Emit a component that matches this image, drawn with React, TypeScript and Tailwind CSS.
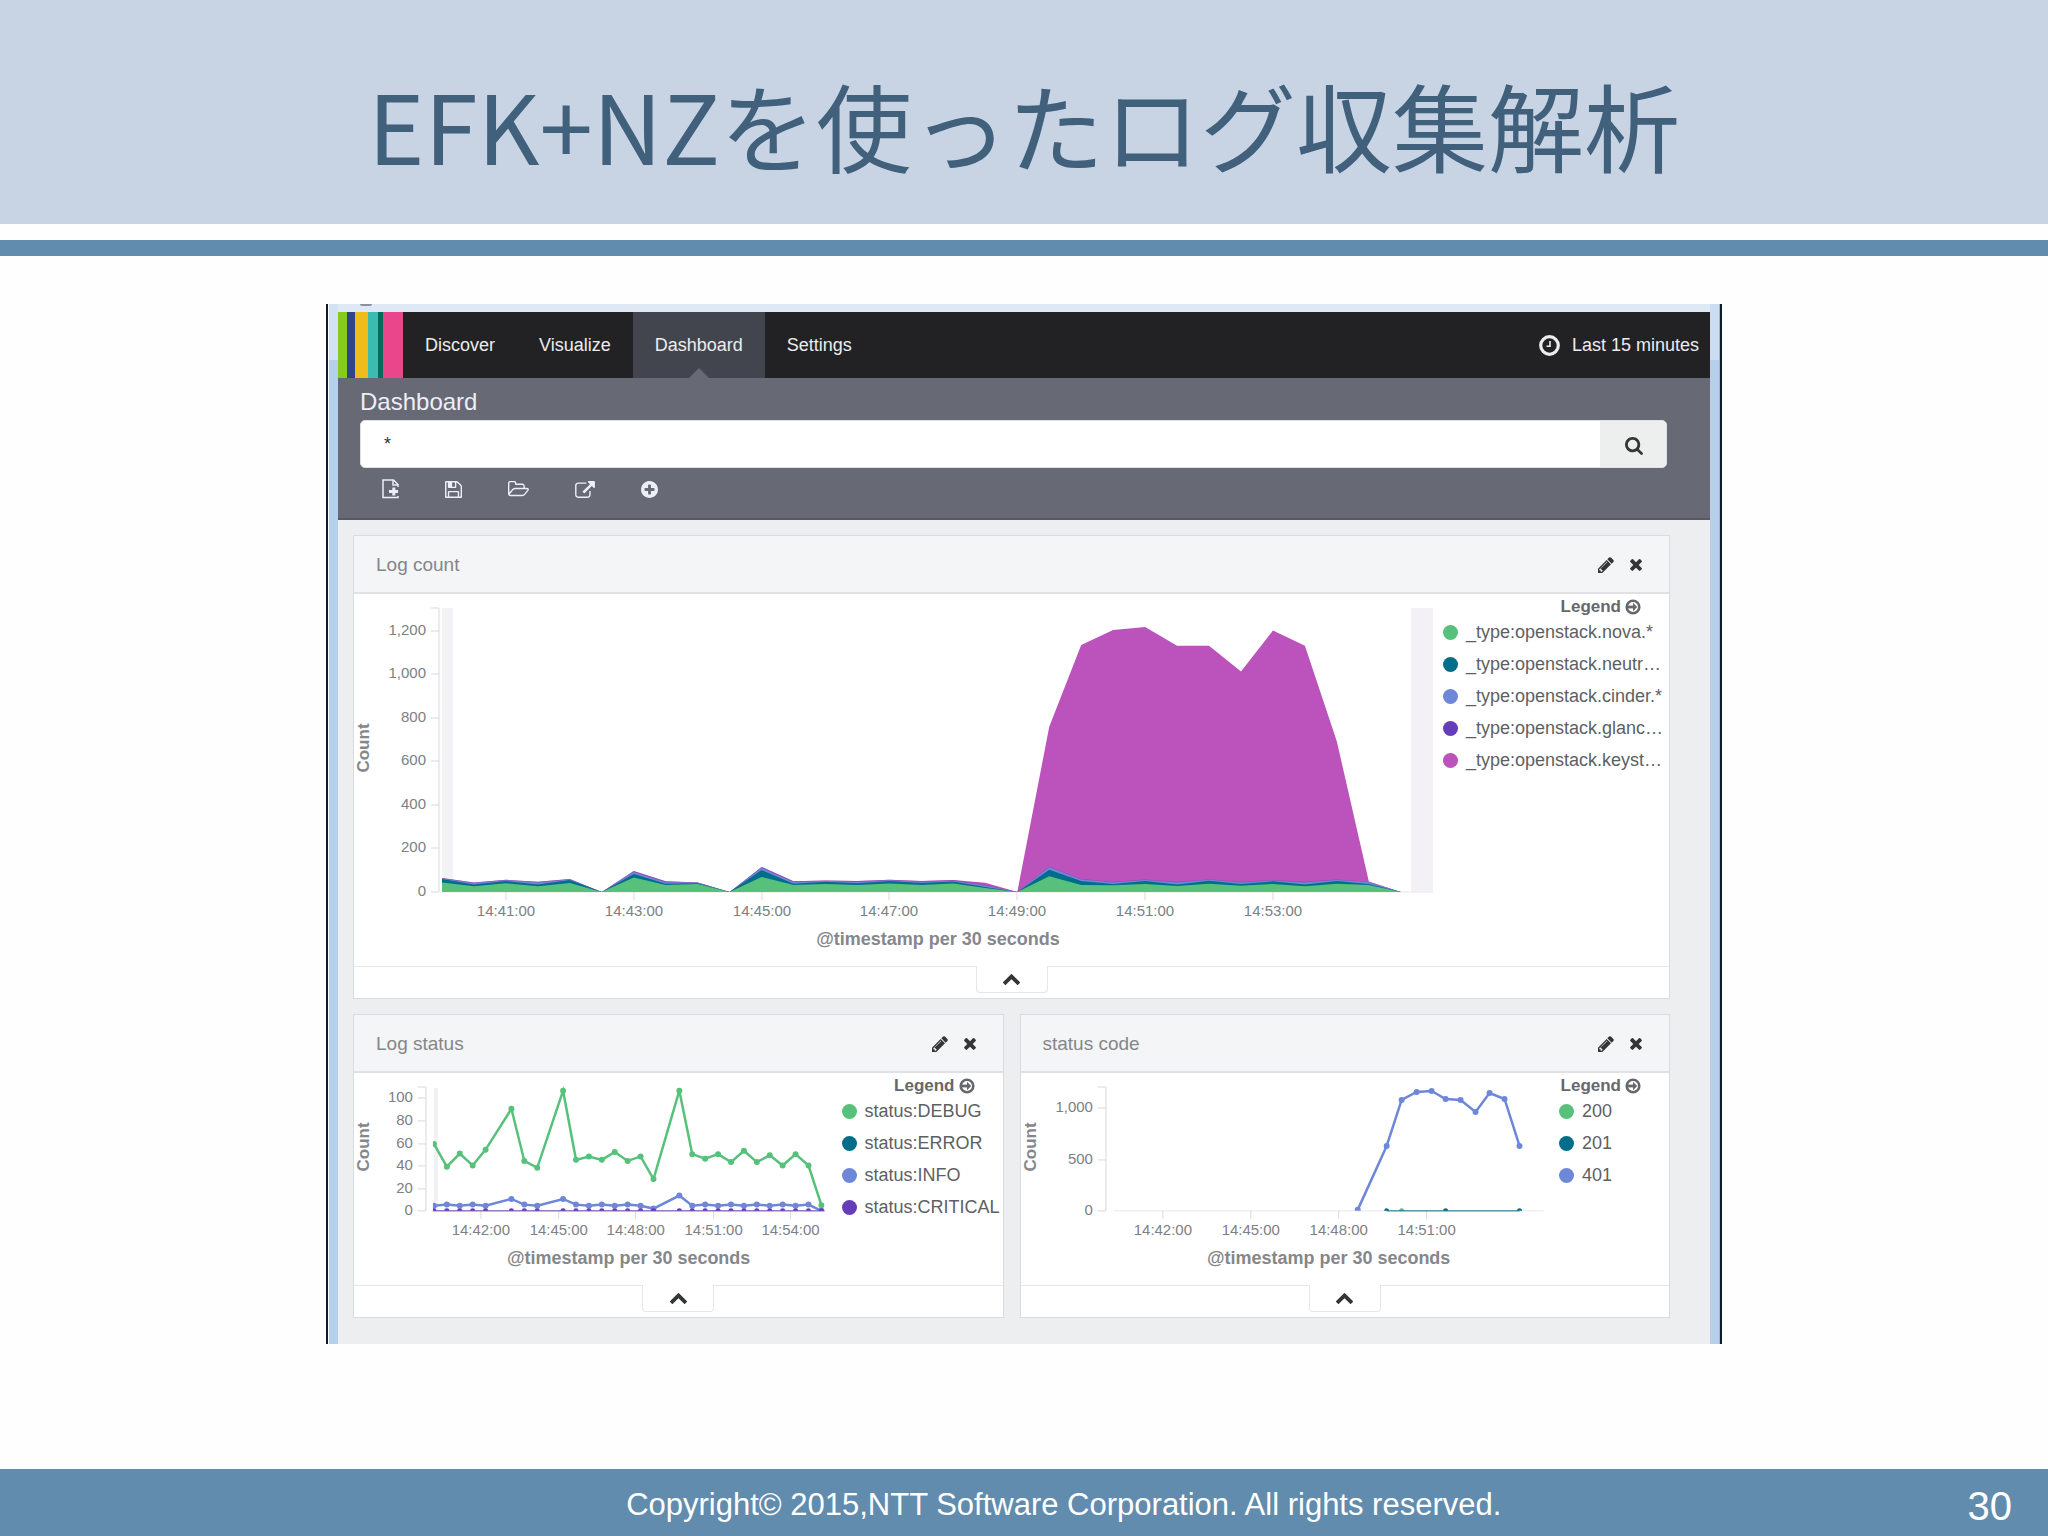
import type { ReactNode } from "react"

const GREEN = "#57c17b"
const TEAL = "#006e8a"
const BLUE = "#6f87d8"
const PURPLE = "#663db8"
const MAGENTA = "#bc52bc"

const icons = {
    pencil: "M491 1536l91-91-235-235-91 91v107h128v128h107zm523-928q0-22-22-22-10 0-17 7l-542 542q-7 7-7 17 0 22 22 22 10 0 17-7l542-542q7-7 7-17zm-54-192l416 416-832 832h-416v-416zm683 96q0 53-37 90l-166 166-416-416 166-165q36-38 90-38 53 0 91 38l235 234q37 39 37 91z",
    times: "M1490 1322q0 40-28 68l-136 136q-28 28-68 28t-68-28l-294-294-294 294q-28 28-68 28t-68-28l-136-136q-28-28-28-68t28-68l294-294-294-294q-28-28-28-68t28-68l136-136q28-28 68-28t68 28l294 294 294-294q28-28 68-28t68 28l136 136q28 28 28 68t-28 68l-294 294 294 294q28 28 28 68z",
    search: "M1216 832q0-185-131.5-316.5t-316.5-131.5-316.5 131.5-131.5 316.5 131.5 316.5 316.5 131.5 316.5-131.5 131.5-316.5zm512 832q0 52-38 90t-90 38q-54 0-90-38l-343-342q-179 124-399 124-143 0-273.5-55.5t-225-150-150-225-55.5-273.5 55.5-273.5 150-225 225-150 273.5-55.5 273.5 55.5 225 150 150 225 55.5 273.5q0 220-124 399l343 343q37 37 37 90z",
    save: "M512 1536h768v-384h-768v384zm896 0h128v-896q0-14-10-38.5t-20-34.5l-281-281q-10-10-34-20t-39-10v416q0 40-28 68t-68 28h-576q-40 0-68-28t-28-68v-416h-128v1280h128v-416q0-40 28-68t68-28h832q40 0 68 28t28 68v416zm-384-928v-320q0-13-9.5-22.5t-22.5-9.5h-192q-13 0-22.5 9.5t-9.5 22.5v320q0 13 9.5 22.5t22.5 9.5h192q13 0 22.5-9.5t9.5-22.5zm640 32v928q0 40-28 68t-68 28h-1344q-40 0-68-28t-28-68v-1344q0-40 28-68t68-28h928q40 0 88 20t76 48l280 280q28 28 48 76t20 88z",
    open: "M1845 931q0-35-53-35h-1088q-40 0-85.5 21.5t-71.5 52.5l-294 363q-18 24-18 40 0 35 53 35h1088q40 0 86-22t71-53l294-363q18-22 18-39zm-1141-163h768v-160q0-40-28-68t-68-28h-576q-40 0-68-28t-28-68v-64q0-40-28-68t-68-28h-320q-40 0-68 28t-28 68v853l256-315q44-53 116-87.5t140-34.5zm1269 163q0 62-46 120l-295 363q-43 53-116 87.5t-140 34.5h-1088q-92 0-158-66t-66-158v-960q0-92 66-158t158-66h320q92 0 158 66t66 158v32h544q92 0 158 66t66 158v160h192q54 0 99 24.5t67 70.5q15 32 15 68z",
    share: "M1408 928v320q0 119-84.5 203.5t-203.5 84.5h-832q-119 0-203.5-84.5t-84.5-203.5v-832q0-119 84.5-203.5t203.5-84.5h704q14 0 23 9t9 23v64q0 14-9 23t-23 9h-704q-66 0-113 47t-47 113v832q0 66 47 113t113 47h832q66 0 113-47t47-113v-320q0-14 9-23t23-9h64q14 0 23 9t9 23zm384-864v512q0 26-19 45t-45 19-45-19l-176-176-652 652q-10 10-23 10t-23-10l-114-114q-10-10-10-23t10-23l652-652-176-176q-19-19-19-45t19-45 45-19h512q26 0 45 19t19 45z",
    plus: "M1344 960v-128q0-26-19-45t-45-19h-256v-256q0-26-19-45t-45-19h-128q-26 0-45 19t-19 45v256h-256q-26 0-45 19t-19 45v128q0 26 19 45t45 19h256v256q0 26 19 45t45 19h128q26 0 45-19t19-45v-256h256q26 0 45-19t19-45zm320-64q0 209-103 385.5t-279.5 279.5-385.5 103-385.5-103-279.5-279.5-103-385.5 103-385.5 279.5-279.5 385.5-103 385.5 103 279.5 279.5 103 385.5z",
    up: "M1683 1331l-166 165q-19 19-45 19t-45-19l-531-531-531 531q-19 19-45 19t-45-19l-166-165q-19-19-19-45.5t19-45.5l742-741q19-19 45-19t45 19l742 741q19 19 19 45.5t-19 45.5z",
}

interface IconProps {
    name: keyof typeof icons
    box: string
    className: string
}

function Icon({ name, box, className }: IconProps) {
    return (
        <svg viewBox={box} className={className} fill="currentColor" aria-hidden="true">
            <path d={icons[name]} />
        </svg>
    )
}

function NewFileIcon() {
    return (
        <svg viewBox="0 0 17 20" className="w-[17px] h-5" fill="none" stroke="currentColor" aria-hidden="true">
            <path d="M16 8V5.500L11.500 1H1v17.500h15V17" strokeWidth="1.500" />
            <path d="M11 1v5h5" strokeWidth="1.500" />
            <path d="M7 12.500h9M11.800 8.500v8" strokeWidth="3" />
        </svg>
    )
}

function ClockIcon() {
    return (
        <svg viewBox="0 0 21 21" className="w-[21px] h-[21px]" fill="none" stroke="currentColor" aria-hidden="true">
            <circle cx="10.500" cy="10.500" r="8.800" strokeWidth="3.200" />
            <path d="M11 6v5.200H7.500" strokeWidth="1.600" />
        </svg>
    )
}

function ArrowCircleIcon() {
    return (
        <svg viewBox="0 0 16 16" className="w-4 h-4" fill="none" stroke="currentColor" aria-hidden="true">
            <circle cx="8" cy="8" r="6.300" strokeWidth="2.600" />
            <path d="M2 8h7" strokeWidth="2.800" />
            <path d="M8 3.800L12.200 8L8 12.200z" fill="currentColor" stroke="none" />
        </svg>
    )
}

interface PanelProps {
    title: string
    legend: { color: string; label: string }[]
    legendWidth: string
    children: ReactNode
}

function Panel({ title, legend, legendWidth, children }: PanelProps) {
    return (
        <section className="min-w-0 bg-white border border-[#d9dcdf]">
            <header className="h-[58px] pt-[2px] pl-[22px] pr-[27px] flex items-center justify-between bg-[#f4f5f7] border-b-2 border-[#dfe1e4]">
                <h2 className="text-[19px] text-[#848689]">{title}</h2>
                <div className="flex items-center gap-4 text-[#343537]">
                    <button type="button" aria-label="Edit">
                        <Icon name="pencil" box="128 128 1536 1536" className="w-4 h-4" />
                    </button>
                    <button type="button" aria-label="Remove">
                        <Icon name="times" box="296 366 1200 1200" className="w-3 h-3" />
                    </button>
                </div>
            </header>

            <div className="flex">
                <div className="flex-1 min-w-0">{children}</div>
                <div className={`${legendWidth} shrink-0`}>
                    <button type="button" className="h-6 pt-px pr-7 ml-auto flex items-center gap-1 text-[17px] font-bold text-[#66686b]">
                        Legend <ArrowCircleIcon />
                    </button>
                    <ul className="flex flex-col gap-1">
                        {legend.map((item) => (
                            <li key={item.label} className="h-7 flex items-center gap-2 text-lg whitespace-nowrap text-[#5d5f62]">
                                <span className="w-[15px] h-[15px] rounded-full" style={{ background: item.color }} />
                                {item.label}
                            </li>
                        ))}
                    </ul>
                </div>
            </div>

            <footer className="h-8 flex justify-center items-start border-t border-[#e6e7ea]">
                <button type="button" aria-label="Collapse" className="-mt-px w-[72px] h-[27px] pt-px flex items-center justify-center bg-white border border-t-0 border-[#e6e7ea] rounded-b text-[#343537]">
                    <Icon name="up" box="90 480 1612 1035" className="w-[17px] h-[11px]" />
                </button>
            </footer>
        </section>
    )
}

interface AxesProps {
    x: number
    top: number
    bottom: number
    right: number
    yTicks: [number, string][]
    xTicks: [number, string][]
    titleX: number
    titleY: number
}

function Axes({ x, top, bottom, right, yTicks, xTicks, titleX, titleY }: AxesProps) {
    return (
        <g>
            <path d={`M${x - 8} ${top}H${x}V${bottom}`} fill="none" stroke="#d8d9de" />
            <path d={`M${x + 8} ${bottom}H${right}`} stroke="#e6e7eb" />
            <g fontSize="15" fill="#7d8084">
                {yTicks.map(([y, label]) => (
                    <g key={label}>
                        <path d={`M${x - 8} ${y}H${x}`} stroke="#d8d9de" />
                        <text x={x - 13} y={y + 4} textAnchor="end">{label}</text>
                    </g>
                ))}
                {xTicks.map(([tx, label]) => (
                    <g key={label}>
                        <path d={`M${tx} ${bottom}v8`} stroke="#d8d9de" />
                        <text x={tx} y={bottom + 24} textAnchor="middle">{label}</text>
                    </g>
                ))}
            </g>
            <g fill="#84878b" fontWeight="bold" textAnchor="middle">
                <text transform={`translate(15 ${(top + bottom) / 2 - 2}) rotate(-90)`} fontSize="17">Count</text>
                <text x={titleX} y={titleY} fontSize="18">@timestamp per 30 seconds</text>
            </g>
        </g>
    )
}

// stacked totals, one entry per 30 seconds from 14:40:00
const nova = [43, 26, 40, 26, 41, 0, 66, 32, 37, 0, 69, 32, 37, 32, 39, 32, 39, 18, 0, 72, 32, 31, 37, 28, 38, 29, 37, 26, 38, 32, 0]
const neutron = [60, 34, 50, 35, 55, 0, 83, 38, 40, 0, 101, 38, 47, 40, 50, 41, 48, 23, 0, 102, 50, 37, 50, 34, 52, 37, 49, 35, 50, 37, 0]
const cinder = [62, 41, 54, 44, 57, 0, 92, 45, 43, 0, 111, 45, 50, 46, 54, 46, 52, 30, 0, 115, 58, 44, 55, 44, 56, 44, 53, 44, 55, 46, 0]
const glance = [64, 44, 56, 47, 59, 0, 96, 49, 44, 0, 115, 49, 53, 50, 56, 50, 55, 33, 0, 117, 60, 47, 57, 47, 58, 47, 55, 47, 57, 47, 0]
const keystone = [64, 44, 56, 47, 59, 0, 96, 49, 44, 0, 115, 49, 53, 50, 56, 50, 55, 42, 0, 758, 1133, 1202, 1216, 1130, 1130, 1011, 1199, 1130, 690, 48, 0]

function area(values: number[]) {
    const points = values.map((v, i) => `${88 + i * 31.96},${(298 - v * 0.218).toFixed(1)}`)
    return `M88,298L${points.join("L")}L1047,298Z`
}

function LogCountChart() {
    return (
        <svg viewBox="0 0 1089 372" className="block w-full h-auto" role="img" aria-label="Log count">
            <rect x="88" y="14" width="11" height="284" fill="#f3f3f6" />
            <rect x="1057" y="14" width="22" height="284" fill="#f3f1f5" />
            <Axes
                x={85}
                top={14}
                bottom={298}
                right={1079}
                yTicks={[[37, "1,200"], [80, "1,000"], [124, "800"], [167, "600"], [211, "400"], [254, "200"], [298, "0"]]}
                xTicks={[[152, "14:41:00"], [280, "14:43:00"], [408, "14:45:00"], [535, "14:47:00"], [663, "14:49:00"], [791, "14:51:00"], [919, "14:53:00"]]}
                titleX={584}
                titleY={351}
            />
            <path d={area(keystone)} fill={MAGENTA} />
            <path d={area(glance)} fill={PURPLE} fillOpacity="0.5" />
            <path d={area(cinder)} fill={BLUE} />
            <path d={area(neutron)} fill={TEAL} />
            <path d={area(nova)} fill={GREEN} />
        </svg>
    )
}

interface LineProps {
    points: number[][]
    color: string
}

function Line({ points, color }: LineProps) {
    return (
        <g>
            <path d={`M${points.map((p) => p.join(",")).join("L")}`} fill="none" stroke={color} strokeWidth="2.500" />
            {points.map(([cx, cy]) => (
                <circle key={cx} cx={cx} cy={cy} r="3" fill={color} />
            ))}
        </g>
    )
}

// [slot, DEBUG, INFO]
const statuses = [
    [0, 59, 4.5], [1, 39, 5.5], [2, 50.5, 4.5], [3, 40, 5.5], [4, 54, 4.5], [6, 90, 10.5], [7, 44, 5.5], [8, 38, 4.5],
    [10, 106, 10.5], [11, 45, 5.5], [12, 48, 4.5], [13, 45, 5.5], [14, 52, 4.5], [15, 44, 5.5], [16, 48, 4.5], [17, 28, 2],
    [19, 106, 13.5], [20, 50, 4.5], [21, 46, 5.5], [22, 50, 4.5], [23, 43, 5.5], [24, 53, 4.5], [25, 43, 5.5], [26, 49, 4.5],
    [27, 40, 5.5], [28, 50, 4.5], [29, 40, 5.5], [30, 5, 0],
]

function statusPoint(slot: number, value: number) {
    return [80 + slot * 12.93, 138 - value * 1.135]
}

function LogStatusChart() {
    return (
        <svg viewBox="0 0 488 212" className="block w-full h-auto" role="img" aria-label="Log status">
            <defs>
                <clipPath id="status-plot">
                    <rect x="79" y="10" width="392" height="128" />
                </clipPath>
            </defs>
            <rect x="80" y="15" width="4" height="123" fill="#f1f0f3" />
            <Axes
                x={72}
                top={14}
                bottom={138}
                right={471}
                yTicks={[[25, "100"], [48, "80"], [71, "60"], [93, "40"], [116, "20"], [138, "0"]]}
                xTicks={[[127, "14:42:00"], [205, "14:45:00"], [282, "14:48:00"], [360, "14:51:00"], [437, "14:54:00"]]}
                titleX={275}
                titleY={191}
            />
            <g clipPath="url(#status-plot)">
                <Line points={statuses.map(([slot, debug]) => statusPoint(slot, debug))} color={GREEN} />
                <Line points={statuses.map(([slot, , info]) => statusPoint(slot, info))} color={BLUE} />
                {statuses.map(([slot]) => (
                    <circle key={slot} cx={statusPoint(slot, 0)[0]} cy="138" r="2.500" fill={PURPLE} />
                ))}
            </g>
            <path d="M79 138H471" stroke={PURPLE} strokeWidth="1" />
        </svg>
    )
}

function StatusCodeChart() {
    return (
        <svg viewBox="0 0 539 212" className="block w-full h-auto" role="img" aria-label="status code">
            <defs>
                <clipPath id="code-plot">
                    <rect x="92" y="10" width="431" height="128" />
                </clipPath>
            </defs>
            <Axes
                x={85}
                top={14}
                bottom={138}
                right={523}
                yTicks={[[35, "1,000"], [87, "500"], [138, "0"]]}
                xTicks={[[142, "14:42:00"], [230, "14:45:00"], [318, "14:48:00"], [406, "14:51:00"]]}
                titleX={308}
                titleY={191}
            />
            <g clipPath="url(#code-plot)">
                {[366, 425, 499].map((cx) => (
                    <circle key={cx} cx={cx} cy="138" r="2.500" fill={TEAL} />
                ))}
                <circle cx="381" cy="138" r="2.500" fill={GREEN} />
                <Line
                    points={[[337, 137], [366, 73], [381, 27], [396, 19], [411, 18], [425, 26], [440, 27], [455, 39], [469, 20], [484, 26], [499, 73]]}
                    color={BLUE}
                />
            </g>
            <path d="M366 138H499" stroke={TEAL} strokeWidth="1" />
        </svg>
    )
}

function NavBar() {
    const link = "h-full px-[22px] flex items-center"

    return (
        <nav className="h-[66px] flex items-center bg-[#222224] text-lg text-[#ececee]">
            <a href="#" aria-label="Home" className="h-full flex">
                <span className="w-[9px] bg-[#86cb1c]" />
                <span className="w-2 bg-[#2f4489]" />
                <span className="w-[13px] bg-[#efbd1b]" />
                <span className="w-[10px] bg-[#3cbcb0]" />
                <span className="w-[5px] bg-[#076b59]" />
                <span className="w-5 bg-[#ea468b]" />
            </a>
            <a href="#discover" className={link}>Discover</a>
            <a href="#visualize" className={link}>Visualize</a>
            <a href="#dashboard" className={`${link} relative bg-[#42454e]`}>
                Dashboard
                <span className="absolute bottom-0 left-1/2 -translate-x-1/2 border-x-10 border-b-10 border-x-transparent border-b-[#676974]" />
            </a>
            <a href="#settings" className={link}>Settings</a>
            <button type="button" className="ml-auto pr-[11px] flex items-center gap-3">
                <ClockIcon /> Last 15 minutes
            </button>
        </nav>
    )
}

function Toolbar() {
    return (
        <div className="h-[142px] pt-2 pl-[22px] pr-[43px] bg-[#676974] border-b-2 border-[#595866] text-[#eceef8]">
            <label htmlFor="query" className="block text-2xl leading-8">Dashboard</label>
            <form className="mt-[2px] h-12 flex rounded-[5px] overflow-hidden border border-[#dfe1ea] bg-white text-[#343537]">
                <input id="query" type="text" defaultValue="*" className="flex-1 min-w-0 pl-[23px] text-lg outline-none" />
                <button type="submit" aria-label="Search" className="w-[66px] pl-[2px] pt-[3px] flex items-center justify-center bg-[#edefef]">
                    <Icon name="search" box="64 128 1664 1664" className="w-[18px] h-[18px]" />
                </button>
            </form>
            <div className="mt-[11px] ml-[22px] flex items-center gap-[46px]">
                <button type="button" aria-label="New"><NewFileIcon /></button>
                <button type="button" aria-label="Save"><Icon name="save" box="128 128 1536 1536" className="w-[17px] h-[17px]" /></button>
                <button type="button" aria-label="Open"><Icon name="open" box="64 160 1920 1440" className="w-[21px] h-4" /></button>
                <button type="button" aria-label="Share"><Icon name="share" box="0 0 1792 1536" className="w-[20px] h-[17px]" /></button>
                <button type="button" aria-label="Add"><Icon name="plus" box="128 128 1536 1536" className="w-[17px] h-[17px]" /></button>
            </div>
        </div>
    )
}

export default function App() {
    return (
        <div className="min-h-screen flex flex-col bg-[#fefefe] font-['Liberation_Sans',Arial,sans-serif]">
            <header>
                <div className="h-56 flex items-center justify-center bg-[#c8d4e3]">
                    <h1 className="pt-6 text-8xl text-[#40607c] font-['Noto_Sans_CJK_JP',sans-serif]">EFK+NZを使ったログ収集解析</h1>
                </div>
                <div className="mt-4 h-4 bg-[#628cad]" />
            </header>

            <main className="mt-12 mb-12 mx-auto w-full max-w-[1396px] flex">
                <div className="w-3 pl-px bg-white border-l-2 border-[#14182b]">
                    <div className="h-14 bg-[#d3e2f2]" />
                    <div className="h-[calc(100%-56px)] bg-[#b5d0ea]" />
                </div>
                <div className="flex-1 min-w-0 bg-[#eceef0]">
                    <div className="h-2 bg-[#dfe8f5]">
                        <div className="ml-[22px] w-3 h-[2px] rounded-b-full bg-[#8c929c]" />
                    </div>
                    <NavBar />
                    <Toolbar />
                    <div className="pt-[15px] pb-[26px] pl-[15px] pr-10 grid gap-[15px]">
                        <Panel
                            title="Log count"
                            legendWidth="w-[226px]"
                            legend={[
                                { color: GREEN, label: "_type:openstack.nova.*" },
                                { color: TEAL, label: "_type:openstack.neutr…" },
                                { color: BLUE, label: "_type:openstack.cinder.*" },
                                { color: PURPLE, label: "_type:openstack.glanc…" },
                                { color: MAGENTA, label: "_type:openstack.keyst…" },
                            ]}
                        >
                            <LogCountChart />
                        </Panel>
                        <div className="grid grid-cols-2 gap-4">
                            <Panel
                                title="Log status"
                                legendWidth="w-[161px]"
                                legend={[
                                    { color: GREEN, label: "status:DEBUG" },
                                    { color: TEAL, label: "status:ERROR" },
                                    { color: BLUE, label: "status:INFO" },
                                    { color: PURPLE, label: "status:CRITICAL" },
                                ]}
                            >
                                <LogStatusChart />
                            </Panel>
                            <Panel
                                title="status code"
                                legendWidth="w-[110px]"
                                legend={[
                                    { color: GREEN, label: "200" },
                                    { color: TEAL, label: "201" },
                                    { color: BLUE, label: "401" },
                                ]}
                            >
                                <StatusCodeChart />
                            </Panel>
                        </div>
                    </div>
                </div>
                <div className="w-3 border-r-2 border-[#0d1f26]">
                    <div className="h-14 bg-[#cddcf1] border-r border-[#62cfe9]" />
                    <div className="h-[calc(100%-56px)] bg-[#b9cee8] border-r border-[#62cfe9]" />
                </div>
            </main>

            <footer className="mt-auto h-[67px] pt-[6px] pl-40 pr-9 flex items-center bg-[#628cad] text-white">
                <p className="flex-1 text-center text-[31px]">Copyright© 2015,NTT Software Corporation. All rights reserved.</p>
                <span className="text-[40px]">30</span>
            </footer>
        </div>
    )
}
